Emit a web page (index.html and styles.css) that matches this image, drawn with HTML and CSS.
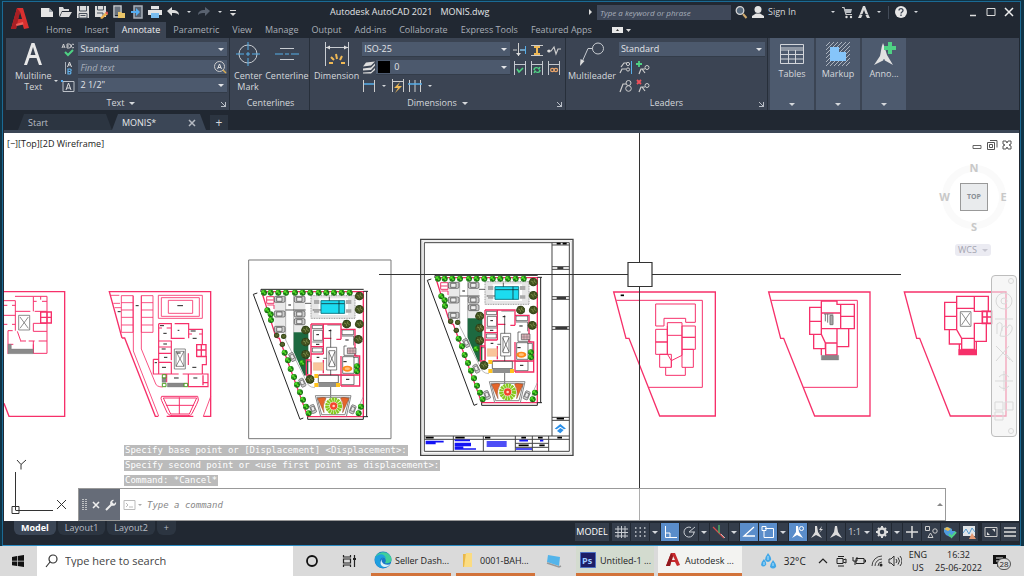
FILE: index.html
```html
<!DOCTYPE html>
<html lang="en">
  <head>
    <meta charset="UTF-8" />
    <meta name="viewport" content="width=device-width, initial-scale=1.0" />
    <title>Autodesk AutoCAD 2021 - MONIS.dwg</title>
    <link rel="stylesheet" href="styles.css">
  </head>
  <body>
    <div class="window">
      <header class="titlebar">
        <button class="app-logo" aria-label="Application menu">
          <svg width="20" height="24" viewBox="0 0 20 24"><path d="M1 22 7 1h6l6 20-5 1-1.500-5H7l-1 5zM8 12h4l-2-7z" fill="#d9302f"/><path d="M1 22 7 1l3 4-4 17z" fill="#a81f24"/><path d="m6 17 7-2 .5 2.500L6.500 19z" fill="#f0605a"/></svg>
        </button>
        <div class="quick">
          <button aria-label="New"><svg viewBox="0 0 14 14"><path d="M1 3h8l4 4v5H1z" fill="#e6e6e6"/><path d="M9 3v4h4" fill="#9aa0a8"/></svg></button>
          <button aria-label="Open"><svg viewBox="0 0 14 14"><path d="M1 12V2h4l1 2h5v2H4z" fill="#dcdcdc"/><path d="M4 7h10l-3 5H2z" fill="#dcdcdc"/></svg></button>
          <button aria-label="Save"><svg viewBox="0 0 14 14"><path d="M1 1h12v12H1z" fill="#dcdcdc"/><path d="M3.500 1v5h7V1M3 8.500h8V13H3z" fill="none" stroke="#47505c"/><path d="M4.500 10.500h5" stroke="#47505c"/></svg></button>
          <button aria-label="Save as"><svg viewBox="0 0 14 14"><path d="M1 1h11v11H1z" fill="#dcdcdc"/><path d="M3.500 1v4h6V1M3 8h6v4" fill="none" stroke="#47505c"/><path d="m6 13 6-6 2 2-6 5z" fill="#edb04c"/><path d="m12 7 2 2" stroke="#dc5454" stroke-width="2"/></svg></button>
          <button aria-label="Open from web"><svg viewBox="0 0 14 14"><path d="M2 1h7v11H2z" fill="none" stroke="#c7cbd0" stroke-width="1.500"/><path d="M3 2h5v8H3z" fill="#69727e"/><path d="M6 13V7h3l1 1h3v5z" fill="#eac568"/></svg></button>
          <button aria-label="Save to web"><svg viewBox="0 0 14 14"><path d="M4 1h8v12H4z" fill="#56606d" stroke="#a9b0b9" stroke-width="1.500"/><path d="M1 6h5V3l4 4-4 4V8H1z" fill="#55aef2"/></svg></button>
          <button aria-label="Plot"><svg viewBox="0 0 14 14"><path d="M3 1h8v4H3zM0 5h14v5H0z" fill="#e3e3e3"/><path d="M3 8h8v5H3z" fill="#79bdf0"/><path d="M3 4.500h8" stroke="#4a525d"/></svg></button>
          <button aria-label="Undo"><svg viewBox="0 0 14 14"><path d="M1 6l5-4v3c5 0 7 2 7 5-2-2-4-2-7-2v3z" fill="#dedede"/></svg></button>
          <button class="drop" aria-label="Undo list"><i class="caret"></i></button>
          <button aria-label="Redo"><svg viewBox="0 0 14 14"><path d="M13 6 8 2v3c-5 0-7 2-7 5 2-2 4-2 7-2v3z" fill="#596270"/></svg></button>
          <button class="drop" aria-label="Redo list"><i class="caret"></i></button>
          <button class="drop" aria-label="Customize"><svg viewBox="0 0 8 14" class="narrow"><path d="M1 5.500h6" stroke="#ddd"/><path d="M1 8h6l-3 3z" fill="#ddd"/></svg></button>
        </div>
        <div class="doc-title"><span>Autodesk AutoCAD 2021</span><span>MONIS.dwg</span></div>
        <div class="title-right">
          <i class="caret-right"></i>
          <input class="keyword" type="text" placeholder="Type a keyword or phrase" aria-label="Type a keyword or phrase">
          <button aria-label="Search"><svg viewBox="0 0 14 14"><circle cx="6" cy="5.500" r="3.800" fill="#56697c" stroke="#d5d5d5" stroke-width="1.300"/><path d="m9 9 3.500 4" stroke="#cfa96d" stroke-width="2"/></svg></button>
          <button class="sign-in"><svg viewBox="0 0 14 14"><circle cx="7" cy="4.500" r="3.500" fill="#e4e4e4"/><path d="M1 13v-2l4-2.500h4l4 2.500v2z" fill="#e4e4e4"/></svg>Sign In</button>
          <button class="drop" aria-label="Account menu"><i class="caret"></i></button>
          <button aria-label="App store"><svg viewBox="0 0 14 14"><path d="M2 2.500h2l2 7h6" fill="none" stroke="#c9c9c9" stroke-width="1.200"/><path d="M4 4h8l-1 4H5.500z" fill="#b9bdc2"/><circle cx="6.500" cy="12" r="1.200" fill="#ddd"/><circle cx="11" cy="12" r="1.200" fill="#ddd"/></svg></button>
          <button aria-label="Stay connected"><svg viewBox="0 0 14 14"><path d="M6 1h2l3.500 9-3-1L7 5 5.500 9l-3 1zM1 13l1.500-3h3L4 13zM13 13l-1.500-3h-3l1.500 3z" fill="#dadada"/></svg></button>
          <button class="drop" aria-label="Connect menu"><i class="caret"></i></button>
          <i class="rule"></i>
          <button aria-label="Help"><svg viewBox="0 0 14 14"><circle cx="7" cy="7" r="6" fill="#e8e8e8"/><path d="M5 5.500C5 3 9 3 9 5.500c0 1.500-2 1.500-2 3M7 9.500v1.500" fill="none" stroke="#3b4453" stroke-width="1.300"/></svg></button>
          <button class="drop" aria-label="Help menu"><i class="caret"></i></button>
          <div class="win-buttons">
            <button aria-label="Minimize"><svg viewBox="0 0 14 14"><path d="M4 10.500h6" stroke="#ddd" stroke-width="1.500"/></svg></button>
            <button aria-label="Maximize"><svg viewBox="0 0 14 14"><path d="M3 3.500h8v7H3z" fill="none" stroke="#ddd"/></svg></button>
            <button aria-label="Close"><svg viewBox="0 0 14 14"><path d="m3 3 8 8M11 3l-8 8" stroke="#eee" stroke-width="1.500"/></svg></button>
          </div>
        </div>
      </header>

      <nav class="menu">
        <button>Home</button>
        <button>Insert</button>
        <button class="active">Annotate</button>
        <button>Parametric</button>
        <button>View</button>
        <button>Manage</button>
        <button>Output</button>
        <button>Add-ins</button>
        <button>Collaborate</button>
        <button>Express Tools</button>
        <button>Featured Apps</button>
        <button class="ribbon-mode" aria-label="Ribbon display"><svg width="20" height="8" viewBox="0 0 20 8"><path d="M0 1h11v6H0z" fill="#e8e8e8"/><path d="M4 5h3L5.500 3z" fill="#333"/><path d="M14 3h5l-2.500 3z" fill="#ddd"/></svg></button>
      </nav>

      <div class="ribbon">
        <section class="panel panel-text">
          <div class="panel-body">
            <button class="big"><svg width="24" height="24" viewBox="0 0 24 24"><path d="M3 23 10.500 1h3L21 23h-3l-2.500-7H8.500L6 23zM9.500 13h5L12 5z" fill="#e8e8e8"/></svg><span>Multiline<br>Text</span></button>
            <i class="caret low"></i>
            <div class="rows">
              <div class="row">
                <button class="tool" aria-label="Check spelling"><svg viewBox="0 0 14 14"><path d="M1 5 2.500 1 4 5M1.500 4h2M6 1v4h2a1 1 0 0 0 0-4zm0 2h2M13 1.500a1.800 1.800 0 1 0 0 3" fill="none" stroke="#d8d8d8" stroke-width=".9"/><path d="m4 9 3 3 5-5" fill="none" stroke="#4fd184" stroke-width="2"/></svg></button>
                <div class="combo"><select aria-label="Text style"><option>Standard</option></select></div>
              </div>
              <div class="row">
                <button class="tool" aria-label="Align text"><svg viewBox="0 0 14 14"><path d="M4.500 1v12" stroke="#a9b0ba"/><path d="m6.500 6 2-5 2 5M7.500 4h2" fill="none" stroke="#ddd"/><path d="M7 8v5h2a1.400 1.400 0 0 0 0-2.600A1.200 1.200 0 0 0 9 8zm0 2.500h2" fill="none" stroke="#62b4ee" stroke-width="1.200"/></svg></button>
                <div class="combo search"><input type="text" placeholder="Find text" aria-label="Find text"><svg viewBox="0 0 14 14"><circle cx="6.500" cy="6.500" r="5" fill="none" stroke="#ccc"/><path d="m4.500 9 2-5 2 5M5 7.500h3" fill="none" stroke="#ddd"/><path d="m10 10 3 3" stroke="#d8ac55" stroke-width="1.500"/></svg></div>
              </div>
              <div class="row">
                <button class="tool" aria-label="Text height"><svg viewBox="0 0 14 14"><path d="M2 2.500h11v10H2z" fill="none" stroke="#bcc1c8"/><path d="m5 11 2.500-7L10 11M6 9h3" fill="none" stroke="#ddd"/><path d="M0 1h2v2H0z" fill="#55aef2"/></svg></button>
                <div class="combo"><select aria-label="Text height"><option>2 1/2"</option></select></div>
              </div>
            </div>
          </div>
          <h2>Text <i class="caret"></i></h2><i class="launch"></i>
        </section>

        <section class="panel panel-center">
          <div class="panel-body">
            <button class="big"><svg width="24" height="24" viewBox="0 0 24 24"><circle cx="12" cy="12" r="9" fill="none" stroke="#c8ccd1"/><path d="M12 0v8M12 16v8M0 12h8M16 12h8M10 12h4M12 10v4" stroke="#57aee8"/></svg><span>Center<br>Mark</span></button>
            <button class="big"><svg width="26" height="24" viewBox="0 0 26 24"><path d="M6 6.500h14M6 17.500h14" stroke="#c8ccd1"/><path d="M1 12h8M11 12h4M17 12h8" stroke="#57aee8"/></svg><span>Centerline</span></button>
          </div>
          <h2>Centerlines</h2>
        </section>

        <section class="panel panel-dim">
          <div class="panel-body">
            <button class="big"><svg width="26" height="24" viewBox="0 0 26 24"><path d="M1.500 0v24M24.500 0v24M2 5.500h22" stroke="#c8ccd1"/><path d="m2 5.500 4-2v4zM24 5.500l-4-2v4z" fill="#ddd"/><path d="M5 21h4M7 15l3 3M12 12l1 5M18 14l-2 4M17 21h4" stroke="#efb955" stroke-width="2"/></svg><span>Dimension</span></button>
            <div class="rows">
              <div class="row">
                <div class="combo"><select aria-label="Dimension style"><option>ISO-25</option></select></div>
                <button class="tool" aria-label="Break"><svg viewBox="0 0 14 14"><path d="M0 7h4M7 7h6M5.500 0v13" stroke="#ccc"/><path d="M7 7h6M12.500 3v8" stroke="#57aee8"/><path d="m3 10 2.500 3L8 10z" fill="#ddd"/></svg></button>
                <button class="tool" aria-label="Adjust space"><svg viewBox="0 0 14 14"><path d="M1 2.500h12M1 12.500h12" stroke="#ccc"/><path d="M4 4h6M7 4v6M4 11h6" stroke="#efb955" stroke-width="2"/></svg></button>
                <button class="tool" aria-label="Jog line"><svg viewBox="0 0 14 14"><path d="M0 8h4l3-4 2 7 2-5h3" fill="none" stroke="#ccc" stroke-width="1.200"/><circle cx="2" cy="8" r="1.500" fill="#ddd"/></svg></button>
              </div>
              <div class="row">
                <div class="combo layer"><svg viewBox="0 0 14 14"><path d="m4 2 9-1-4 4-8 1zM1 8l8-1 4-4v2L9 9.500 1 10zM1 12l8-.500 4-4v2L9 13H1z" fill="#ddd"/></svg><span class="swatch"></span><select aria-label="Dimension layer"><option>0</option></select></div>
                <button class="tool" aria-label="Inspect"><svg viewBox="0 0 14 14"><path d="M1.500 0v14M12.500 0v14M1 3.500h12" stroke="#c4c8ce"/><path d="m4 8 2 3 4-4" fill="none" stroke="#4fd184" stroke-width="1.600"/></svg></button>
                <button class="tool" aria-label="Update"><svg viewBox="0 0 14 14"><path d="M1.500 0v14M12.500 0v14M1 3.500h12" stroke="#c4c8ce"/><path d="M4 9c0-3 4-3 5-1l1-2M10 9c0 3-4 3-5 1l-1 2" fill="none" stroke="#4fd184" stroke-width="1.400"/></svg></button>
                <button class="tool" aria-label="Reassociate"><svg viewBox="0 0 14 14"><path d="M1.500 0v14M12.500 0v14M1 3.500h12" stroke="#c4c8ce"/><circle cx="5.300" cy="9" r="1.700" fill="none" stroke="#e9a46a" stroke-width="1.200"/><circle cx="8.900" cy="9" r="1.700" fill="none" stroke="#e9a46a" stroke-width="1.200"/></svg></button>
              </div>
              <div class="row">
                <button class="tool" aria-label="Linear"><svg viewBox="0 0 14 14"><path d="M1.500 1v12M12.500 1v12" stroke="#ccc"/><path d="M2 5h10" stroke="#57aee8" stroke-width="1.500"/></svg></button>
                <button class="drop" aria-label="Linear list"><i class="caret"></i></button>
                <button class="tool" aria-label="Quick dimension"><svg viewBox="0 0 14 14"><path d="M1.500 0v13M12.500 0v13M1 2.500h12" stroke="#ccc"/><path d="M9 3 3 9h4l-3 5 7-7H7z" fill="#efb955"/></svg></button>
                <button class="tool" aria-label="Continue"><svg viewBox="0 0 14 14"><path d="M1.500 1v12M7 1v12M12.500 1v12" stroke="#ccc"/><path d="M0 5h14" stroke="#57aee8" stroke-width="1.500"/></svg></button>
                <button class="drop" aria-label="Continue list"><i class="caret"></i></button>
              </div>
            </div>
          </div>
          <h2>Dimensions <i class="caret"></i></h2><i class="launch"></i>
        </section>

        <section class="panel panel-lead">
          <div class="panel-body">
            <button class="big"><svg width="26" height="24" viewBox="0 0 26 24"><circle cx="19" cy="6.500" r="5.500" fill="none" stroke="#c8ccd1"/><path d="M13.500 6.500H9L3 20" fill="none" stroke="#c8ccd1"/><path d="m1 24 .5-7 4 2z" fill="#ddd"/></svg><span>Multileader</span></button>
            <div class="rows">
              <div class="row">
                <div class="combo"><select aria-label="Multileader style"><option>Standard</option></select></div>
              </div>
              <div class="row">
                <button class="tool" aria-label="Align leaders"><svg viewBox="0 0 14 14"><path d="M1 12 3 8h4M2 6l3-4h3" fill="none" stroke="#ccc" stroke-width="1.200"/><circle cx="9" cy="3" r="1.600" fill="none" stroke="#ccc"/><circle cx="9" cy="8.500" r="1.600" fill="none" stroke="#ccc"/><path d="M12.500 0v13" stroke="#57aee8"/></svg></button>
                <button class="tool" aria-label="Add leader"><svg viewBox="0 0 14 14"><path d="M3 0v6M0 3h6" stroke="#4fd184" stroke-width="1.800"/><path d="m3 13 2-5h4M9 12 6 8" fill="none" stroke="#ccc" stroke-width="1.200"/><circle cx="11" cy="6.500" r="2" fill="none" stroke="#ccc"/></svg></button>
              </div>
              <div class="row">
                <button class="tool" aria-label="Collect leaders"><svg viewBox="0 0 14 14"><path d="m1 13 3-8h3" fill="none" stroke="#ccc" stroke-width="1.200"/><circle cx="9.500" cy="4" r="2.500" fill="none" stroke="#ccc"/><circle cx="9.500" cy="9.500" r="2.800" fill="none" stroke="#ccc"/></svg></button>
                <button class="tool" aria-label="Remove leader"><svg viewBox="0 0 14 14"><path d="m1 1 4 4M5 1 1 5" stroke="#f0505a" stroke-width="1.800"/><path d="m3 13 2-5h4M9 12 6 8" fill="none" stroke="#ccc" stroke-width="1.200"/><circle cx="11" cy="6.500" r="2" fill="none" stroke="#ccc"/></svg></button>
              </div>
            </div>
          </div>
          <h2>Leaders</h2><i class="launch"></i>
        </section>

        <button class="tile"><svg width="24" height="24" viewBox="0 0 24 24"><path d="M.5 2.500h23v19H.500zM.500 8h23M.500 12.500h23M.500 17h23M8.500 8v13M15.500 8v13M.500 6h23" fill="none" stroke="#d2d5da"/></svg><span>Tables</span><i class="caret"></i></button>
        <button class="tile"><svg width="24" height="24" viewBox="0 0 24 24"><path d="m0 4 4-4M0 8l8-8M0 12 12 0M0 16 16 0M0 20 20 0M0 24 24 0M4 24 24 4M8 24 24 8M12 24l12-12M16 24l8-8M20 24l4-4" stroke="#b9bfc8" stroke-width=".9"/><path d="M4 5h9v5h7v9H4z" fill="#86c5fa"/></svg><span>Markup</span><i class="caret"></i></button>
        <button class="tile"><svg width="24" height="24" viewBox="0 0 24 24"><path d="M11 1c2 5 3 9 4 12l6 10-9-5-10 5 6-9c1-4 1-8 3-13z" fill="#e2e2e2"/><path d="M12 17v6" stroke="#4d5a6e"/><path d="M18 0v12M12 6h12" stroke="#4fd184" stroke-width="4"/></svg><span>Anno...</span><i class="caret"></i></button>
      </div>

      <div class="doc-tabs">
        <button class="doc-tab start">Start</button>
        <button class="doc-tab active">MONIS*<svg width="8" height="8" viewBox="0 0 8 8"><path d="m1 1 6 6M7 1 1 7" stroke="#b5bac2" stroke-width="1.500"/></svg></button>
        <button class="doc-add">+</button>
      </div>

      <main class="canvas">
        <svg class="drawing" viewBox="4 133 1015 388" preserveAspectRatio="xMidYMid slice">
          <defs>
            <g id="tree"><circle r="9" fill="#1f7a18"/><circle cx="-1" cy="-1" r="7" fill="#3ccb22"/><path d="m-7 3 5-1 2 6M3-7v5l5 2" stroke="#0c470c" stroke-width="2" fill="none"/><path d="M-5-4h4M1 2h3" stroke="#9be23c" stroke-width="2"/></g>
            <g id="oak"><circle r="13" fill="#2c3d17"/><path d="M-14 0-8-5-9-11-2-9 4-13 7-7 13-5 10 1 13 7 5 8 1 13-4 8-10 9z" fill="#42521f"/><path d="m-8-3 6 2 2 7M4-8 2-2l7 4" stroke="#a8b86b" stroke-width="1.500" fill="none"/></g>
            <g id="car"><rect x="-16" y="-9" width="32" height="18" rx="4" fill="#ccc" stroke="#444" stroke-width="2"/><path d="M-9-6v12H7V-6z" fill="#eee" stroke="#444" stroke-width="2"/></g>
            <g id="site">
              <path d="M103 137h34v110h-34zM161 137h35v110h-35z" fill="#e9e9e9"/>
              <path d="M137 130v140l68 135q8 8 20 8M161 130v170l44 90" fill="none" stroke="#999" stroke-width="2"/>
              <path d="M161 247h44v125l-12 5-32-72z" fill="#1d6940"/>
              <path d="M213 137h132v68H213z" fill="#e6e6e6" stroke="#999" stroke-width="3" stroke-dasharray="3 2"/>
              <path d="M236 145h88v50h-88z" fill="#fff"/>
              <path d="M243 152h71v38h-71z" fill="#1cdcf0" stroke="#177c8a" stroke-width="3"/>
              <path d="M297 152v38M244 161h69M268 140v12M195 160h18M218 180h25M137 180h60" stroke="#111" stroke-width="2"/>
              <path d="M222 150h16v12h-16zM318 150h16v12h-16zM222 178h16v10h-16zM318 178h16v10h-16z" fill="#aaa"/>
              <path d="M65 125H370V500H203L118 265l-10-3z" fill="none" stroke="#f22c62" stroke-width="4"/>
              <path d="M63 118H371M63 118v8M380 124V500M370 124h14M370 500h14M203 500v8H370v-8M40 133l12-4M40 133 180 508l10-4" fill="none" stroke="#222" stroke-width="3"/>
              <path d="M80 140h22v20H80zM82 165h20v12M80 150h20" fill="none" stroke="#ee3b6c" stroke-width="3"/>
              <path d="M217 226h31v10h-31zM220 241h28v30h-28zM217 276h33M217 294h30v12h-30zM306 240h35v14h-35zM306 258h35v28M308 320h34v50h-34zM340 322h15v45M304 376h38v28h-38M262 225h38M345 292v26M200 335h14v36M320 288h-8v28h40" fill="none" stroke="#333" stroke-width="2"/>
              <path d="M213 222h90v16h42v80h14v90H303M213 222v153M213 375h-14v-45h14M303 238v30M250 222v90M250 330v40M303 318v90M303 375h56M303 268h-14M250 265h24M213 290h37M213 312h37M236 375h67" fill="none" stroke="#f22c62" stroke-width="4"/>
              <path d="M260 292h30v68h-30zM266 305l19 42M285 305l-19 42M267 302h18v48h-18z" fill="none" stroke="#444" stroke-width="2"/>
              <path d="M322 294h26v17h-26z" fill="#d9b1b7" stroke="#555" stroke-width="2"/><path d="M330 294v17M339 294v17M322 303h26" stroke="#555"/>
              <path d="M272 238v54M272 360v20M272 411v34M250 325h10" stroke="#222" stroke-width="2"/>
              <path d="M266 242h8M229 254h8M228 283h10M230 322h8M316 270h10M310 335h10M318 388h10M262 385h10M145 165h8" stroke="#111" stroke-width="3"/>
              <path d="M235 376h60v22h-60z" fill="#fff" stroke="#222" stroke-width="2"/><path d="M235 399h60v12h-60z" fill="#8e8e8e"/>
              <path d="M220 338h30v23h-30z" fill="#f9c59b" stroke="#dba477"/>
              <ellipse cx="322" cy="356" rx="15" ry="9" fill="#ff8b1c"/><ellipse cx="322" cy="356" rx="8" ry="4" fill="#ffc27d"/>
              <path d="M223 372h12v12h-12zM223 399h12v12h-12zM288 399h12v12h-12z" fill="#ffc21c"/>
              <path d="M226 437H333L319 500M226 437l16 63M231 442h97l-13 52h-70z" fill="none" stroke="#888" stroke-width="3"/>
              <path d="M233 445q22-5 25 0-12 20-6 43zM327 445q-22-5-25 0 12 20 6 43z" fill="#e4652a" stroke="#8c3f1c" stroke-width="1.500"/>
              <circle cx="281" cy="468" r="19" fill="none" stroke="#86c91f" stroke-width="13" stroke-dasharray="6 1.500"/>
              <circle cx="281" cy="468" r="11" fill="#f3442d"/><circle cx="281" cy="468" r="4" fill="#ffd5c0"/>
              <path d="m370 440-14 30-5 30" stroke="#999" stroke-width="2" fill="none"/>
              <use href="#car" x="119" y="148"/><use href="#car" x="179" y="148"/><use href="#car" x="119" y="192"/><use href="#car" x="179" y="192"/><use href="#car" x="179" y="215"/><use href="#car" x="119" y="238"/>
              <use href="#car" transform="translate(157 321) rotate(64) scale(.8)"/><use href="#car" transform="translate(187 398) rotate(64) scale(.8)"/><use href="#car" transform="translate(219 477) rotate(68) scale(.8)"/><use href="#car" transform="translate(338 478) rotate(112) scale(.8)"/>
              <use href="#tree" x="72" y="128"/><use href="#tree" x="92" y="128"/><use href="#tree" x="115" y="128"/><use href="#tree" x="138" y="128"/><use href="#tree" x="165" y="128"/><use href="#tree" x="188" y="128"/><use href="#tree" x="211" y="128"/><use href="#tree" x="236" y="128"/><use href="#tree" x="259" y="128"/><use href="#tree" x="282" y="128"/><use href="#tree" x="305" y="128"/><use href="#tree" x="329" y="128"/>
              <use href="#tree" x="82" y="181"/><use href="#tree" x="92" y="193"/><use href="#tree" x="93" y="210"/><use href="#tree" x="134" y="308"/><use href="#tree" x="144" y="331"/><use href="#tree" x="152" y="357"/><use href="#tree" x="162" y="381"/><use href="#tree" x="171" y="404"/><use href="#tree" x="180" y="427"/><use href="#tree" x="189" y="449"/><use href="#tree" x="198" y="470"/><use href="#tree" x="206" y="490"/><use href="#tree" x="187" y="339"/><use href="#tree" x="351" y="349"/><use href="#tree" x="351" y="364"/><use href="#tree" x="363" y="470"/><use href="#tree" x="356" y="490"/>
              <use href="#oak" transform="translate(110 256) scale(.6)"/><use href="#oak" transform="translate(131 259) scale(.6)"/><use href="#oak" transform="translate(127 283) scale(.6)"/>
              <use href="#oak" x="358" y="138"/><use href="#oak" x="358" y="178"/><use href="#oak" x="358" y="222"/><use href="#oak" x="320" y="222"/><use href="#oak" x="355" y="268"/><use href="#oak" x="197" y="240"/><use href="#oak" x="197" y="276"/><use href="#oak" x="197" y="313"/><use href="#oak" x="210" y="388"/>
            </g>
          </defs>

          <!-- ground and first floor outlines -->
          <g transform="translate(0 230) scale(.33333)" fill="none" stroke="#f6306a" stroke-width="4">
            <path d="M12 185H194V559H27L12 520"/>
            <path d="M45 199h55v45M100 199h41v171H100v-37M12 212h34v90M12 226h10M36 226h10M12 256h34M12 283h10M36 283h10M100 214h10M126 214h15M122 199v10M46 244h45M100 280h41M100 304h41M100 280v24M24 302v70M24 302h14M52 304l10 28M60 333h18M86 333h18M116 333h25M40 343H24M100 343v27M104 244h36" stroke-width="3"/>
            <path d="M122 246h32v33h-32zM141 246v33M122 262h32" stroke-width="4"/>
            <path d="M24 343h10v14h66v14H24z" fill="#8a8a8a" stroke="#777" stroke-width="1"/>
            <path d="M56 256h33v44H56zM60 261l25 34M85 261l-25 34" stroke="#555" stroke-width="2"/>

            <path d="M366 324 328 185H632V559H610M500 559h80M475 559H466L374 324h-8"/>
            <path d="M364 197h35v110h-35zM364 218h35M364 240h35M364 262h35M364 285h35M424 197h35v110h-35zM424 218h35M424 240h35M424 262h35M424 285h35M332 196h26M340 220h20M344 233h20M400 197v166l76 195M424 197v160l42 102q3 12 22 12M475 196h132v69H475zM484 203h114v56H484zM505 211h73v39h-73zM632 500l-22 59" stroke-width="2.500"/>
            <path d="M476 281h38v42M476 281v150M524 281h42v44M512 325h42M566 298h41v46M566 312h10M597 312h10M476 333h38v20M476 351h38v40M476 370h38M476 397h38v34M460 388h16M460 388v44h76M548 432h76v38H565v-38M607 380h12v24h-12v28M476 294h10M500 294h14M500 432v25M565 370v35M590 380h17" stroke-width="3.500"/>
            <path d="M590 344h28v35h-28zM604 344v35M590 360h28M609 436v30M609 458h15" stroke-width="4"/>
            <path d="M485 499h108q6 10-3 24l-14 28q-4 6-12 6h-48q-10 0-15-10l-16-35q-4-8 0-13zM490 504h100l-22 48h-56zM538 502v50M498 526h84" stroke-width="3"/>
            <path d="M523 357h33v60h-33zM528 364l24 45M552 364l-24 45M528 364h24v45h-24z" stroke="#555" stroke-width="2"/>
            <path d="M502 459h50v12h-50zM486 443h12v14h-12z" fill="#888" stroke="#777" stroke-width="1"/>
            <path d="M487 434h11v10h-11zM487 460h11v10h-11zM552 460h11v10h-11z" stroke="#4f9e24" stroke-width="3"/>
            <path d="M532 227h17M407 227h9M353 245h9M490 310h10M533 301h5M578 325h12M490 342h11M492 382h10M486 412h12M577 412h12M522 444h14M580 444h12M531 369h11M464 398h7M480 287h12M572 303h15M485 357h12" stroke="#222" stroke-width="3"/>
          </g>

          <g transform="translate(240 250) scale(.33333)">
            <path d="M26 30H453V566H26z" fill="none" stroke="#777" stroke-width="3"/>
            <use href="#site"/>
          </g>

          <!-- plot sheet with title block -->
          <g transform="translate(410 230) scale(.33333)" fill="none" stroke="#444" stroke-width="3">
            <path d="M32 28H489V676H32z" stroke-width="4"/><path d="M43 38H478V664H43z"/><path d="M37 33H484V670H37z" stroke="#ddd"/>
            <path d="M426 38V618M43 618H478M426 45h52M426 110h52M426 118h52M426 200h52M426 208h52M426 290h52M426 298h52M426 562h52M426 571h52M130 618v46M220 618v46M316 618v46M367 618v46M416 618v46M43 628H478M316 640h100M316 652h100"/>
            <path d="M440 41h12M458 41h12M442 114h18M440 204h28M436 294h36M440 566h22M47 623h24M136 623h28M225 623h16M334 623h14M384 623h14M442 623h14M326 646h30M388 646h16" stroke="#000" stroke-width="5"/>
            <path d="M47 635h54M47 640h30M134 631h46M134 641h49M134 646h49M134 652h26M134 657h64M230 636h60M230 642h60M230 648h60M328 632h26M390 632h10M318 657h48" stroke="#1414f4" stroke-width="5"/>
            <path d="m434 596 17-14 17 14-6 2-11-8-11 8zM451 594l10 6-10 10-10-7z" fill="#2b8fe8" stroke="none"/>
          </g>
          <use href="#site" transform="translate(414 236) scale(.33333)"/>

          <!-- upper floors -->
          <g transform="translate(600 260) scale(.33333)" fill="none" stroke="#f6306a" stroke-width="4">
            <path d="M41 96H346V468H179L87 235h-9z"/>
            <path d="M49 121H307V382H145M167 132h119v55h-29v-12h-65v23h-25zM202 188h44v38h-44zM202 198v84l12 20 32-16v-60M167 208h35v38h-35zM167 246h35v37h-35zM246 198h40v34h-40zM246 232h40v36h-40zM179 283h35v39h-35zM246 268h34v54h-34zM197 322v24h59v-24M214 302v20" stroke-width="3"/>
            <path d="M62 106h10" stroke="#000" stroke-width="5"/>
            <path d="M506 96H810V468H644L551 235h-9z"/><path d="M514 121H772V382H610" stroke-width="3"/>
            <path d="M664 123h47v10h11v26h-58zM722 133h41v36h-41zM722 169h41v37h-41zM629 142h35v42h-35zM629 184h35v39h-35zM664 184v22h58M664 206v17l12 25M641 223h23l12 26v17h-35zM711 206h35v54h-35zM677 249h34v36h-34zM664 266v20M664 160v30"/>
            <path d="M664 286h52v14h-52z" fill="#888" stroke="#777" stroke-width="1"/>
            <path d="M672 162h28M676 162v22M683 162v26M690 166h9v28h-9z" fill="#aaa" stroke="#777" stroke-width="3"/>
            <path d="M913 96H1218V468H1051L959 235h-9z"/>
            <path d="M1070 109h53v36h-53zM1123 109h42v45h-42zM1034 127h36v42h-36zM1034 169h36v40h-36zM1123 190h36v54h-36zM1048 209h22l15 26v17h-37zM1085 235h38v33h-38zM1078 254v16M1123 244h6v26"/>
            <path d="M1077 270h52v14h-52z" fill="#f6306a"/>
            <path d="M1147 154h28v36h-28zM1161 154v36M1147 171h28" stroke-width="5"/>
            <path d="M1081 155h32v44h-32zM1084 158l26 38M1110 158l-26 38" stroke="#555" stroke-width="2"/>
          </g>

          <!-- crosshair -->
          <path d="M639.500 133V262M639.500 287V521M379 274.500H628M652 274.500H901" stroke="#333"/>
          <path d="M628 262.500h24v24h-24z" fill="none" stroke="#333" stroke-width="1.200"/>

          <!-- UCS icon -->
          <path d="M15.500 472V510M15.500 510.500H53M12 506.500h7v7h-7zM57 500l9 9M66 500l-9 9M17 460l4 4.500 5-4.500M21 464.500v5" fill="none" stroke="#333"/>
        </svg>

        <div class="view-label">[−][Top][2D Wireframe]</div>
        <div class="view-buttons">
          <button aria-label="Minimize view"><svg viewBox="0 0 12 12"><path d="M2 6.500h8v3H2z" fill="none" stroke="#666"/></svg></button>
          <button aria-label="Restore view"><svg viewBox="0 0 12 12"><path d="M4 1.500h7v7M1.500 3.500h7v7h-7zM3.500 5.500h3v3h-3z" fill="none" stroke="#555"/></svg></button>
          <button aria-label="Close view"><svg viewBox="0 0 12 12"><path d="M2 2h3l1 2 1-2h3v3L8 6l2 1v3H7L6 8l-1 2H2V7l2-1-2-1z" fill="none" stroke="#555"/></svg></button>
        </div>
        <div class="compass">
          <span class="n">N</span><span class="w">W</span><button class="cube">TOP</button><span class="e">E</span><span class="s">S</span>
        </div>
        <button class="wcs">WCS <i class="caret"></i></button>
        <div class="navbar">
          <svg width="24" height="160" viewBox="0 0 24 160" fill="none" stroke="#d9d9d9"><circle cx="19" cy="5" r="2.500"/><circle cx="12" cy="25" r="8"/><circle cx="12" cy="25" r="3"/><path d="M3 43h18M5 58V48q3-3 5 0v7M10 52q3-4 5 0l2-3q4 0 3 5-3 8-12 6zM4 70l14 14M17 70 4 85M14 78l7 8M3 105h18M12 95v20M7 101q5-5 10 0M7 110q5 5 10 0M3 126h8v8H3zM13 126h8v8h-8zM3 136h8v8H3z"/><circle cx="19" cy="155" r="2.500"/></svg>
        </div>

        <div class="command">
          <p class="history"><span>Specify base point or [Displacement] &lt;Displacement&gt;:</span></p>
          <p class="history"><span>Specify second point or &lt;use first point as displacement&gt;:</span></p>
          <p class="history"><span>Command: *Cancel*</span></p>
          <div class="command-bar">
            <div class="grip">
              <svg width="5" height="12" viewBox="0 0 5 12"><path d="M1 0v12M4 0v12" stroke="#ddd" stroke-width="1.500" stroke-dasharray="1 1"/></svg>
              <button aria-label="Close command line"><svg width="8" height="8" viewBox="0 0 8 8"><path d="m1 1 6 6M7 1 1 7" stroke="#eee" stroke-width="1.600"/></svg></button>
              <button aria-label="Customize command line"><svg width="12" height="12" viewBox="0 0 12 12"><path d="m1 11 6-6" stroke="#eee" stroke-width="2"/><path d="M11 3 9 5 7 3l2-2a3 3 0 1 0 2 2" fill="#eee"/></svg></button>
            </div>
            <svg width="20" height="12" viewBox="0 0 20 12" fill="none" stroke="#bbb"><path d="M1 1.500h11v9H1zM3 4l2 2-2 2M6 8h4"/><path d="M15 5h4l-2 2z" fill="#aaa" stroke="none"/></svg>
            <input type="text" placeholder="Type a command" aria-label="Type a command">
            <i class="caret-up"></i>
          </div>
        </div>
      </main>

      <footer class="statusbar">
        <div class="layouts">
          <button class="active">Model</button><button>Layout1</button><button>Layout2</button><button>+</button>
        </div>
        <div class="status-tools">
          <button class="model">MODEL</button>
          <button aria-label="Grid"><svg viewBox="0 0 14 14"><path d="M4 1v12M7.500 1v12M11 1v12M1 4h13M1 7.500h13M1 11h13" stroke="#c9cdd3"/></svg></button>
          <button aria-label="Snap"><svg viewBox="0 0 14 14"><path d="M2 3h11M2 7h11M2 11h11" stroke="#c9cdd3" stroke-width="1.500" stroke-dasharray="1.500 3"/></svg></button>
          <button class="drop" aria-label="Snap list"><i class="caret"></i></button>
          <button class="on" aria-label="Ortho"><svg viewBox="0 0 14 14"><path d="M2.500 1v11.500H14M3 8h4v4" fill="none" stroke="#fff"/></svg></button>
          <button aria-label="Polar"><svg viewBox="0 0 14 14"><path d="M12 7a5 5 0 1 1-3-4.500M7 7l6-5M7 7h6" fill="none" stroke="#c9cdd3"/></svg></button>
          <button class="drop" aria-label="Polar list"><i class="caret"></i></button>
          <button aria-label="Isometric"><svg viewBox="0 0 14 14"><path d="m1 2 11 11" stroke="#d84d4d" stroke-width="1.300"/><path d="M7 0v8" stroke="#4fb86b" stroke-width="1.300"/><path d="m9 9 4 4" stroke="#bbb"/></svg></button>
          <button class="drop" aria-label="Isometric list"><i class="caret"></i></button>
          <button class="on" aria-label="Object tracking"><svg viewBox="0 0 14 14"><path d="M12 2 2 11h11" fill="none" stroke="#fff" stroke-width="1.300"/></svg></button>
          <button class="on" aria-label="Object snap"><svg viewBox="0 0 14 14"><path d="M4 3.500h8.500v9H3V5" fill="none" stroke="#fff"/><path d="M1 1.500h4v4H1z" fill="none" stroke="#fff"/></svg></button>
          <button class="drop" aria-label="Object snap list"><i class="caret"></i></button>
          <button class="on" aria-label="Annotation visibility"><svg viewBox="0 0 14 14"><path d="M5 1h2l1 6 4 6-6-3-5 3 4-6z" fill="#fff"/><circle cx="10.500" cy="3.500" r="2" fill="none" stroke="#fff"/></svg></button>
          <button aria-label="Auto scale"><svg viewBox="0 0 14 14"><path d="M5 1h2l1 6 4 6-6-3-5 3 4-6zM12 1 9 5h2L9 8l4-4h-2z" fill="#dcdcdc"/></svg></button>
          <button aria-label="Annotation scale"><svg viewBox="0 0 14 14"><path d="M6 1h2l1 6 4 6-6-3-6 3 4-6z" fill="#dcdcdc"/></svg></button>
          <button class="scale">1:1 <i class="caret"></i></button>
          <button aria-label="Workspace"><svg viewBox="0 0 14 14"><circle cx="7" cy="7" r="3.500" fill="none" stroke="#ddd" stroke-width="2.500"/><path d="M7 1v2M7 11v2M1 7h2M11 7h2M3 3l1 1M10 10l1 1M11 3l-1 1M4 10l-1 1" stroke="#ddd" stroke-width="2"/></svg></button>
          <button class="drop" aria-label="Workspace list"><i class="caret"></i></button>
          <button aria-label="Annotation monitor"><svg viewBox="0 0 14 14"><path d="M7 1v12M1 7h12" stroke="#ddd" stroke-width="1.500"/></svg></button>
          <button aria-label="Isolate objects"><svg viewBox="0 0 14 14"><path d="M1.500 1.500h4v4h-4zM4 12.500 6.500 8 9 12.500z" fill="none" stroke="#ccc"/><circle cx="11" cy="6" r="2.200" fill="none" stroke="#ccc"/></svg></button>
          <button aria-label="Hardware acceleration"><svg viewBox="0 0 14 14"><path d="m1 3 4-1 4 2v2h3v4l-5 2-4-2-2-3z" fill="#4f9bdd"/><path d="m1 4 3-2 4 2-3 2z" fill="#e8bd56"/><path d="m6 9 2.500 3L13 7" fill="none" stroke="#4fd184" stroke-width="2"/></svg></button>
          <button aria-label="Graphics performance"><svg viewBox="0 0 14 14"><path d="M1 1h12v10H1z" fill="#e0e4e8"/><path d="m1 8 3-4 3 5 3-6 3 4" fill="none" stroke="#559bd0"/><path d="m7 14 3-6 4 6z" fill="#e59a74"/></svg></button>
          <button class="gap" aria-label="Clean screen"><svg viewBox="0 0 14 14"><path d="M1 2.500h12v9H1z" fill="none" stroke="#ccc"/><path d="M8 4h3v3zM3 7v3h3z" fill="#ddd"/></svg></button>
          <button aria-label="Customization"><svg viewBox="0 0 14 14"><path d="M1 3h12M1 7h12M1 11h12" stroke="#ddd" stroke-width="1.500"/></svg></button>
        </div>
      </footer>
    </div>

    <div class="taskbar">
      <button class="start-btn" aria-label="Start"><svg width="12" height="12" viewBox="0 0 12 12"><path d="m0 2 5-1v4.700H0zM5.700.900 12 0v5.700H5.700zM0 6.400h5V11l-5-.700zM5.700 6.400H12V12l-6.300-.900z" fill="#111"/></svg></button>
      <label class="task-search"><svg width="14" height="14" viewBox="0 0 14 14"><circle cx="8" cy="5" r="4" fill="none" stroke="#333" stroke-width="1.200"/><path d="m5 8-4 5" stroke="#333" stroke-width="1.200"/></svg><input type="text" placeholder="Type here to search" aria-label="Type here to search"></label>
      <button class="task-icon" aria-label="Cortana"><svg viewBox="0 0 14 14"><circle cx="7" cy="7" r="5" fill="none" stroke="#111" stroke-width="1.800"/></svg></button>
      <button class="task-icon" aria-label="Task view"><svg viewBox="0 0 14 14"><path d="M1.500 1v2h7V1M1.500 13v-2h7v2M1.500 5h7v4h-7zM12.500 1v12" fill="none" stroke="#222" stroke-width="1.200"/><path d="M11 4h3v2h-3z" fill="#222"/></svg></button>
      <button class="task-app"><svg viewBox="0 0 18 18"><circle cx="9" cy="9" r="8.500" fill="#1878c9"/><path d="M1 7C3 0 14-1 17 6c2 5-2 7-6 6 2-3 0-6-3-6-3 0-6 0-7 4z" fill="#3fcf9a"/><path d="M1 7c3-5 10-5 11 1-3-3-6-1-6 2 0 4 4 6 8 4-5 6-14 2-13-7z" fill="#1e9fdf"/><path d="M9 7c-2 1-2 4 1 6 2 1 5 1 6 0-1 2-3 3-5 3-5 0-6-6-2-9z" fill="#dff1f7"/></svg><span>Seller Dash...</span></button>
      <button class="task-app folder"><svg viewBox="0 0 18 18"><path d="M4 3h5l1 12-6 1z" fill="#e9b84a"/><path d="M7 2h6v14H5z" fill="#fbdc82"/></svg><span>0001-BAH...</span></button>
      <button class="task-icon wide" aria-label="This PC"><svg viewBox="0 0 18 18"><path d="m3 3 12 2-1 9-12-4z" fill="#53b4ea"/><path d="m2 11 12 4 2-1" fill="none" stroke="#999" stroke-width="1.500"/></svg></button>
      <button class="task-app ps"><svg viewBox="0 0 18 18"><path d="M1.500 1.500h15v15h-15z" fill="#1d1e66" stroke="#4c70c4"/><text x="3" y="13" font-size="9" font-weight="bold" fill="#9ec9ff">Ps</text></svg><span>Untitled-1 ...</span></button>
      <button class="task-app active"><svg viewBox="0 0 18 18"><path d="M2 15 7 2h4l5 12-3 1-2-4H7l-1 4zM8 9h3L9 5z" fill="#c72a2e"/><path d="M2 15 7 2l2 3-3 10z" fill="#91191f"/></svg><span>Autodesk ...</span></button>
      <div class="tray">
        <button class="weather"><svg viewBox="0 0 18 18"><path d="M8 1q4 5 3 7-3 4-6 0 0-3 3-7zM4 7q3 4 2 6-3 3-5 0 0-3 3-6zM13 8q4 5 3 7-3 3-6 0 0-3 3-7z" fill="#42a8e8"/><path d="M8 4v4M4 10v3M13 11v3" stroke="#b7e3fb"/></svg>32°C</button>
        <button aria-label="Show hidden icons"><svg viewBox="0 0 14 14"><path d="m3 9 4-4 4 4" fill="none" stroke="#222" stroke-width="1.200"/></svg></button>
        <button aria-label="Meet now"><svg viewBox="0 0 14 14"><path d="M3 4.500h6v5H3zM9 6l3-1v4L9 8M4 2.500h6M4 12h6" fill="none" stroke="#222"/></svg></button>
        <button aria-label="Battery"><svg viewBox="0 0 14 14"><path d="M4 4.500h8v5H4zM12 6h1.500v2H12M1 3v4h4V3M3 7v4" fill="none" stroke="#222"/></svg></button>
        <button aria-label="Network"><svg viewBox="0 0 14 14"><path d="M2 12A10 10 0 0 1 12 2M5 12a7 7 0 0 1 7-7M8 12a4 4 0 0 1 4-4" fill="none" stroke="#444"/><circle cx="11" cy="11" r="1.500" fill="#222"/></svg></button>
        <button aria-label="Volume"><svg viewBox="0 0 14 14"><path d="M1 5h2l3-3v10L3 9H1zM8 5q2 2 0 4M10 3.500q3 3.500 0 7M12 2q4 5 0 10" fill="none" stroke="#333"/></svg></button>
        <button class="lang">ENG<br>US</button>
        <button class="clock">16:32<br>25-06-2022</button>
        <button class="notice" aria-label="28 notifications"><svg viewBox="0 0 14 12"><path d="M0 0h13v9H7l-3 3V9H0z" fill="#111"/><path d="M3 3h7M3 6h7" stroke="#eee"/></svg><span>28</span></button>
      </div>
    </div>
  </body>
</html>
```
FILE: styles.css
```css
* {
  margin: 0;
  padding: 0;
  box-sizing: border-box;
}

body {
  min-height: 100vh;
  display: flex;
  flex-direction: column;
  font-family: "Open Sans", "Noto Sans", sans-serif;
  font-size: 9px;
  line-height: 12px;
  color: #d5d8dc;
  background: #0f3446;
  overflow: hidden;
}

button,
input,
select {
  font: inherit;
  color: inherit;
  background: none;
  border: none;
  outline: none;
  white-space: nowrap;
}

svg {
  display: block;
  flex: none;
}

.window {
  flex: 1;
  display: flex;
  flex-direction: column;
  margin: 1px 3px 0 2px;
  padding: 0 1px;
  border: 1px solid #1b6a94;
  border-bottom-color: #2a8cc4;
  background: #212832;
}

/* carets */
.caret {
  display: inline-block;
  flex: none;
  border: 3px solid transparent;
  border-top-color: #d5d8dc;
  border-bottom-width: 0;
}

.drop .caret {
  border-width: 2px 2px 0;
}

.caret-right {
  border: 3px solid transparent;
  border-left-color: #ddd;
  border-right-width: 0;
  margin-right: 2px;
}

.caret-up {
  border: 3px solid transparent;
  border-bottom-color: #888;
  border-top-width: 0;
}

/* title bar */
.titlebar {
  display: flex;
  align-items: center;
  height: 20px;
  position: relative;
}

.app-logo {
  position: absolute;
  left: 6px;
  top: 5px;
}

.quick {
  display: flex;
  align-items: center;
  gap: 4px;
  padding-left: 36px;
}

.quick svg,
.title-right svg,
.tool svg,
.status-tools svg,
.tray svg {
  width: 14px;
  height: 14px;
}

.quick svg.narrow {
  width: 8px;
}

.drop {
  width: 9px;
  display: flex;
  justify-content: center;
}

.doc-title {
  flex: 1;
  display: flex;
  gap: 8px;
  padding-left: 93px;
  white-space: nowrap;
  color: #e2e4e7;
}

.title-right {
  display: flex;
  align-items: center;
  gap: 3px;
}

.keyword {
  width: 134px;
  height: 15px;
  padding: 0 3px;
  background: #3f4859;
  font-size: 8px;
}

::placeholder {
  color: #a8afba;
  font-style: italic;
  opacity: 1;
}

.sign-in {
  display: flex;
  align-items: center;
  gap: 3px;
  width: 74px;
}

.rule {
  width: 1px;
  height: 13px;
  background: #424b58;
  margin: 0 2px;
}

.win-buttons {
  display: flex;
  gap: 4px;
  margin-left: 43px;
  padding-right: 3px;
}

/* ribbon tabs */
.menu {
  display: flex;
  height: 16px;
  padding-left: 35px;
}

.menu button {
  padding: 0 6px 0 7px;
  color: #a9afb8;
}

.menu .active {
  background: #3b4453;
  color: #eef0f2;
}

.menu .ribbon-mode {
  padding-left: 14px;
}

/* ribbon */
.ribbon {
  display: flex;
  gap: 2px;
  height: 72px;
  margin-left: 2px;
  background: #3b4453;
}

.panel {
  position: relative;
  display: flex;
  flex-direction: column;
  padding: 4px 2px 0 2px;
  border-right: 1px solid #272f3a;
}

.panel-text {
  width: 224px;
  padding-left: 9px;
}

.panel-center {
  width: 78px;
}

.panel-dim {
  width: 254px;
  padding-right: 4px;
}

.panel-lead {
  width: 200px;
  padding-left: 0;
}

.panel-body {
  flex: 1;
  display: flex;
  gap: 3px;
}

.panel h2 {
  display: flex;
  justify-content: center;
  align-items: center;
  gap: 5px;
  height: 14px;
  font-size: 9px;
  font-weight: normal;
}

.launch {
  position: absolute;
  right: 3px;
  bottom: 3px;
  width: 5px;
  height: 5px;
  border: solid #b9bec6;
  border-width: 0 1px 1px 0;
  background: linear-gradient(45deg, transparent 40%, #b9bec6 40% 60%, transparent 60%);
}

.big {
  display: flex;
  flex-direction: column;
  align-items: center;
  gap: 4px;
  line-height: 11px;
}

.low {
  margin-top: 38px;
  border-width: 2px 2px 0;
}

.rows {
  flex: 1;
  display: flex;
  flex-direction: column;
  gap: 3px;
}

.row {
  display: flex;
  align-items: center;
  gap: 3px;
  height: 15px;
}

.combo {
  position: relative;
  flex: 1;
  display: flex;
  align-items: center;
  height: 15px;
  background: #4c596d;
  border-bottom: 1px solid #333c49;
}

.combo::after {
  content: "";
  position: absolute;
  right: 3px;
  top: 6px;
  border: 3px solid transparent;
  border-top-color: #e2e4e7;
  border-bottom-width: 0;
  pointer-events: none;
}

.combo select,
.combo input {
  appearance: none;
  flex: 1;
  min-width: 0;
  height: 14px;
  padding: 0 2px;
  color: #e2e4e7;
}

.combo.search::after {
  display: none;
}

.combo svg {
  width: 14px;
  height: 14px;
}

.layer svg {
  background: #3b4453;
  height: 15px;
}

.layer {
  gap: 2px;
}

.swatch {
  width: 12px;
  height: 12px;
  background: #000;
}

.tile {
  display: flex;
  flex-direction: column;
  align-items: center;
  width: 44px;
  padding-top: 4px;
  background: #4d5a6e;
}

.tile span {
  margin-top: 2px;
}

.tile .caret {
  margin-top: auto;
  margin-bottom: 4px;
}

/* drawing tabs */
.doc-tabs {
  display: flex;
  align-items: flex-end;
  height: 23px;
  padding-left: 14px;
  border-bottom: 3px solid #3b4656;
}

.doc-tab {
  display: flex;
  justify-content: space-between;
  align-items: center;
  width: 94px;
  height: 16px;
  padding: 1px 10px 0;
  background: #2c3541;
  clip-path: polygon(6px 0, 88px 0, 100% 100%, 0 100%);
  color: #b9bec6;
}

.doc-tab.active {
  background: #3b4656;
  color: #e6e8ea;
}

.doc-add {
  width: 18px;
  height: 15px;
  margin-left: 4px;
  background: #2c3541;
  font-size: 12px;
}

/* drawing area */
.canvas {
  flex: 1;
  position: relative;
  min-height: 300px;
  background: #fff;
  color: #222;
}

.drawing {
  position: absolute;
  width: 100%;
  height: 100%;
}

.view-label {
  position: absolute;
  left: 3px;
  top: 5px;
}

.view-buttons {
  position: absolute;
  right: 6px;
  top: 6px;
  display: flex;
  gap: 3px;
}

.view-buttons svg {
  width: 12px;
  height: 12px;
}

.compass {
  position: absolute;
  right: 0;
  top: 19px;
  display: grid;
  grid-template: 31px 28px 31px / 31px 28px 31px;
  grid-template-areas:
    ". n ."
    "w c e"
    ". s .";
  place-items: center;
  font-size: 11px;
  font-weight: bold;
  color: #c8c8c8;
}

.compass::before {
  content: "";
  position: absolute;
  inset: 13px;
  border: 7px solid #fafafa;
  border-radius: 50%;
}

.n {
  grid-area: n;
}

.w {
  grid-area: w;
}

.e {
  grid-area: e;
}

.s {
  grid-area: s;
}

.compass span,
.cube {
  position: relative;
}

.cube {
  grid-area: c;
  width: 28px;
  height: 28px;
  border: 1px solid #999;
  background: #e9ebed;
  font-size: 7px;
  font-weight: bold;
  color: #8a8f96;
}

.wcs {
  position: absolute;
  right: 28px;
  top: 111px;
  display: flex;
  align-items: center;
  justify-content: space-between;
  width: 36px;
  height: 12px;
  padding: 0 3px;
  border-radius: 3px;
  background: #ebebf2;
  color: #a4a4b0;
}

.wcs .caret {
  border-top-color: #c6c6d0;
}

.navbar {
  position: absolute;
  right: 2px;
  top: 142px;
  border: 1px solid #bdbdbd;
  border-radius: 4px;
  background: rgba(240, 240, 240, 0.6);
}

.command {
  position: absolute;
  left: 74px;
  right: 73px;
  bottom: 0;
  font-family: "DejaVu Sans Mono", "Liberation Mono", monospace;
}

.history {
  height: 15px;
  padding: 2px 0 0 46px;
  line-height: 11px;
  color: #fff;
}

.history span {
  display: block;
  width: fit-content;
  padding: 0 1px;
  background: #bbb;
}

.command-bar {
  display: flex;
  align-items: center;
  height: 33px;
  padding-right: 2px;
  border: 1px solid #999;
  background: rgba(255, 255, 255, 0.6);
}

.grip {
  align-self: stretch;
  display: flex;
  align-items: center;
  justify-content: space-around;
  width: 41px;
  margin-right: 3px;
  background: #666c78;
}

.command-bar input {
  flex: 1;
  padding-left: 4px;
}

.command-bar ::placeholder {
  color: #888;
}

/* status bar */
.statusbar {
  display: flex;
  justify-content: space-between;
  height: 24px;
}

.layouts {
  display: flex;
  padding-left: 10px;
}

.layouts button {
  height: 14px;
  padding: 0 7px;
  margin-right: 2px;
  background: #2c3541;
  border-radius: 0 0 6px 6px;
  color: #b9bec6;
}

.layouts .active {
  background: #3b4656;
  font-weight: bold;
  color: #fff;
}

.status-tools {
  display: flex;
  gap: 1px;
  height: 18px;
  margin-top: 2px;
}

.status-tools button {
  display: flex;
  align-items: center;
  justify-content: center;
  width: 18px;
  background: #343d4b;
}

.status-tools .drop {
  width: 10px;
}

.status-tools .drop .caret {
  border-width: 3px 3px 0;
}

.status-tools .on {
  background: #5a8dca;
}

.status-tools .model {
  width: 34px;
  margin-right: 2px;
  color: #fff;
}

.status-tools .scale {
  width: 26px;
  gap: 3px;
}

.status-tools .gap {
  margin-left: 3px;
}

/* windows taskbar */
.taskbar {
  display: flex;
  height: 30px;
  background: #dadada;
  color: #222;
}

.start-btn {
  width: 37px;
  padding-left: 12px;
}

.task-search {
  display: flex;
  align-items: center;
  gap: 6px;
  width: 256px;
  padding-left: 8px;
  background: #fff;
}

.task-search input {
  flex: 1;
  font-size: 11px;
}

.task-search ::placeholder {
  color: #444;
  font-style: normal;
}

.task-icon {
  width: 37px;
  display: flex;
  align-items: center;
  justify-content: center;
}

.task-icon svg {
  width: 14px;
  height: 14px;
}

.task-icon.wide svg,
.task-app svg,
.tray .weather svg {
  width: 18px;
  height: 18px;
}

.task-app {
  display: flex;
  align-items: center;
  gap: 3px;
  width: 80px;
  margin-left: 4px;
  padding-left: 3px;
  border-bottom: 3px solid #d2733a;
}

.task-app span {
  padding-top: 3px;
}

.task-app.folder {
  width: 79px;
  margin-left: 5px;
}

.task-app.ps {
  width: 78px;
  background: #d3dbcf;
}

.task-app.active {
  width: 84px;
  padding-left: 6px;
  background: #f3f3f1;
}

.tray {
  flex: 1;
  display: flex;
  align-items: center;
  justify-content: flex-end;
  gap: 4px;
}

.weather {
  display: flex;
  align-items: center;
  gap: 6px;
  font-size: 10px;
  margin-right: 6px;
}

.lang,
.clock {
  line-height: 13px;
  text-align: center;
}

.lang {
  margin: 0 4px 0 3px;
}

.clock {
  margin-right: 7px;
}

.notice {
  position: relative;
  width: 31px;
}

.notice span {
  position: absolute;
  left: 4px;
  top: 4px;
  width: 14px;
  height: 12px;
  border: 1px solid #555;
  border-radius: 6px;
  background: #dadada;
  font-size: 8px;
  line-height: 10px;
}
```
